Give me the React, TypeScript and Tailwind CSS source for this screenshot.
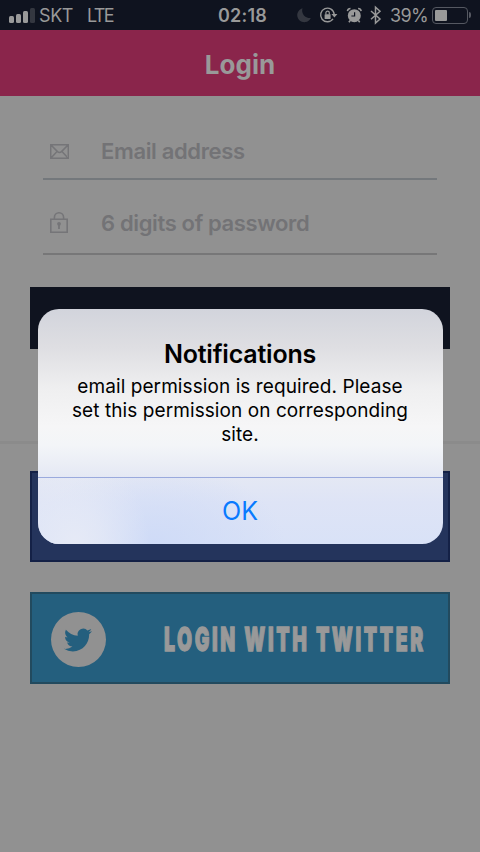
function StatusIcons() {
  return (
    <svg width="86" height="20" viewBox="0 0 86 20" className="shrink-0" fill="none" stroke="#999999">
      {/* do not disturb */}
      <path d="M6.5 3.2A7.1 7.1 0 1 0 14.8 13A7.6 7.6 0 0 1 6.5 3.2Z" fill="#343740" stroke="none" />
      {/* rotation lock */}
      <path d="M37 13.9A6.8 6.8 0 1 1 38.2 9.4" strokeWidth="1.4" />
      <path d="M35.4 9H41.4L38.4 12.4Z" fill="#999999" stroke="none" />
      <rect x="28.6" y="9.2" width="6" height="4.8" rx=".5" fill="#999999" stroke="none" />
      <path d="M29.9 9.6V7.8A1.7 1.7 0 0 1 33.3 7.8V9.6" strokeWidth="1.2" />
      {/* alarm */}
      <circle cx="58.3" cy="10.7" r="6.5" fill="#999999" stroke="none" />
      <path d="M54.2 15.5L52.9 17.2M62.4 15.5L63.7 17.2" strokeWidth="1.6" />
      <path d="M51.4 6.1A3.2 3.2 0 0 1 54.5 3.5M62.1 3.5A3.2 3.2 0 0 1 65.2 6.1" strokeWidth="1.5" />
      <path d="M58.6 7.2V11H55.4" stroke="#0f131f" strokeWidth="1.2" />
      {/* bluetooth */}
      <path d="M75 6L84 14L79.5 18V2.2L84 6.2L75 14.2" strokeWidth="1.5" />
    </svg>
  );
}

function StatusBar() {
  return (
    <div className="grid h-[30px] grid-cols-[218px_78px_1fr] items-center bg-[#0f131f] text-[18px] text-[#999999]">
      <div className="flex items-center pl-[9px]">
        <div className="flex h-4 items-end gap-[2px]">
          <span className="h-[7px] w-[5px] rounded-[1.5px] bg-[#999999]" />
          <span className="h-[9px] w-[5px] rounded-[1.5px] bg-[#999999]" />
          <span className="h-3 w-[5px] rounded-[1.5px] bg-[#999999]" />
          <span className="h-[15px] w-[5px] rounded-[1.5px] bg-[#343740]" />
        </div>
        <span className="ml-[4px] w-[48px] tracking-[-0.4px]">SKT</span>
        <span className="tracking-[-1.6px]">LTE</span>
      </div>
      <span className="font-semibold tracking-[0.2px]">02:18</span>
      <div className="flex items-center">
        <StatusIcons />
        <span className="ml-[8px] w-[42px] tracking-[-0.6px]">39%</span>
        <div className="flex items-center gap-px">
          <div className="h-[17px] w-[36px] rounded-[4px] border border-[#555861] p-[2px]">
            <div className="h-full w-3 rounded-[1px] bg-[#999999]" />
          </div>
          <div className="h-[6px] w-[2px] rounded-r-full bg-[#555861]" />
        </div>
      </div>
    </div>
  );
}

function Mail() {
  return (
    <svg width="19" height="15" viewBox="0 0 19 15" fill="none" stroke="#757578" strokeWidth="1.5">
      <path d="M.7.7H18.3V14.3H.7ZM1 1L7.5 7.6Q9.5 9.4 11.5 7.6L18 1M1 14L7 7.4M18 14L12 7.4" />
    </svg>
  );
}

function Lock() {
  return (
    <svg width="18" height="21" viewBox="0 0 18 21" fill="none" stroke="#757578" strokeWidth="1.6">
      <path d="M.8 7.2H17.2V20.2H.8ZM4.4 7V5.4A4.6 4.6 0 0 1 13.6 5.4V7" />
      <circle cx="9" cy="11.8" r="1.9" fill="#757578" stroke="none" />
      <path d="M9 12V17" strokeWidth="1.8" />
    </svg>
  );
}

function Bird() {
  return (
    <svg width="28" height="28" viewBox="0 0 24 24" fill="currentColor">
      <path d="M23.953 4.57a10 10 0 01-2.825.775 4.958 4.958 0 002.163-2.723c-.951.555-2.005.959-3.127 1.184a4.92 4.92 0 00-8.384 4.482C7.69 8.095 4.067 6.13 1.64 3.162a4.822 4.822 0 00-.666 2.475c0 1.71.87 3.213 2.188 4.096a4.904 4.904 0 01-2.228-.616v.06a4.923 4.923 0 003.946 4.827 4.996 4.996 0 01-2.212.085 4.936 4.936 0 004.604 3.417 9.867 9.867 0 01-6.102 2.105c-.39 0-.779-.023-1.17-.067a13.995 13.995 0 007.557 2.209c9.053 0 13.998-7.496 13.998-13.985 0-.21 0-.42-.015-.63A9.935 9.935 0 0024 4.59z" />
    </svg>
  );
}

function Alert() {
  return (
    <div className="absolute left-[37.5px] top-[309px] flex h-[235px] w-[405px] flex-col overflow-hidden rounded-[21px] bg-[linear-gradient(180deg,#d2d4dc_0%,#dedee2_16%,#efeff0_34%,#f6f6f7_50%,#f3f5f8_58%,#e4e8f4_72%,#dee4f6_82%,#d9e2f7_100%)] text-center text-black">
      <div className="h-[168px] pt-[30px]">
        <h2 className="text-[25px] font-semibold leading-[30px] tracking-[-0.2px]">Notifications</h2>
        <p className="mt-[6px] whitespace-nowrap text-[19px] leading-6 tracking-[0.08px]">
          email permission is required. Please
          <br />
          set this permission on corresponding
          <br />
          site.
        </p>
      </div>
      <button className="flex-1 border-t border-[#9aaadd] bg-[radial-gradient(75px_90px_at_9%_100%,#e6eaf6_0%,#e6eaf6aa_40%,#e6eaf600_100%),radial-gradient(130px_80px_at_29%_100%,#cfdbf7_0%,#cfdbf700_100%)] pt-[2px] text-[25px] text-[#087aff]">
        OK
      </button>
    </div>
  );
}

export default function App() {
  return (
    <div className="relative h-[852px] w-[480px] overflow-hidden bg-[#919191] font-['Inter',sans-serif]">
      <StatusBar />
      <header className="flex h-[66px] items-center justify-center bg-[#8a254b] pt-[2px] text-[26px] font-bold text-[#999999]">
        Login
      </header>
      <div className="ml-[43px] w-[394px] pt-[26px] text-[22px] font-semibold tracking-[-0.36px] text-[#737376]">
        <div className="flex h-[58px] items-center border-b-2 border-[#6d7277]/80">
          <div className="w-[58px] pl-[7px] pt-[2px]">
            <Mail />
          </div>
          <span className="pt-[2px]">Email address</span>
        </div>
        <div className="flex h-[75px] items-center border-b-2 border-[#707072]/80 pt-[11px]">
          <div className="w-[58px] pl-[7px]">
            <Lock />
          </div>
          <span className="pt-[2px]">6 digits of password</span>
        </div>
      </div>
      <div className="mx-[30px] mt-8 h-[62px] bg-[#0f131f]" />
      <div className="mt-[92px] h-[3px] bg-[#8b8b8b]" />
      <div className="mx-[30px] mt-[27px] h-[91px] border-2 border-[#142146] bg-[#24345c]" />
      <div className="mx-[30px] mt-[30px] flex h-[92px] items-center border-2 border-[#224a5e] bg-[#245f7e] pl-[18.5px] text-[#999999]">
        <div className="mt-[2px] flex size-[55px] items-center justify-center rounded-full bg-[#919191] pt-px text-[#245f7e]">
          <Bird />
        </div>
        <div className="ml-[58.5px] w-[262px] pt-[3px]">
          <span className="inline-block origin-left scale-x-[0.59] whitespace-nowrap text-[33px] font-black tracking-[4.4px] [-webkit-text-stroke:1.3px_#999999]">
            LOGIN WITH TWITTER
          </span>
        </div>
      </div>
      <Alert />
    </div>
  );
}
